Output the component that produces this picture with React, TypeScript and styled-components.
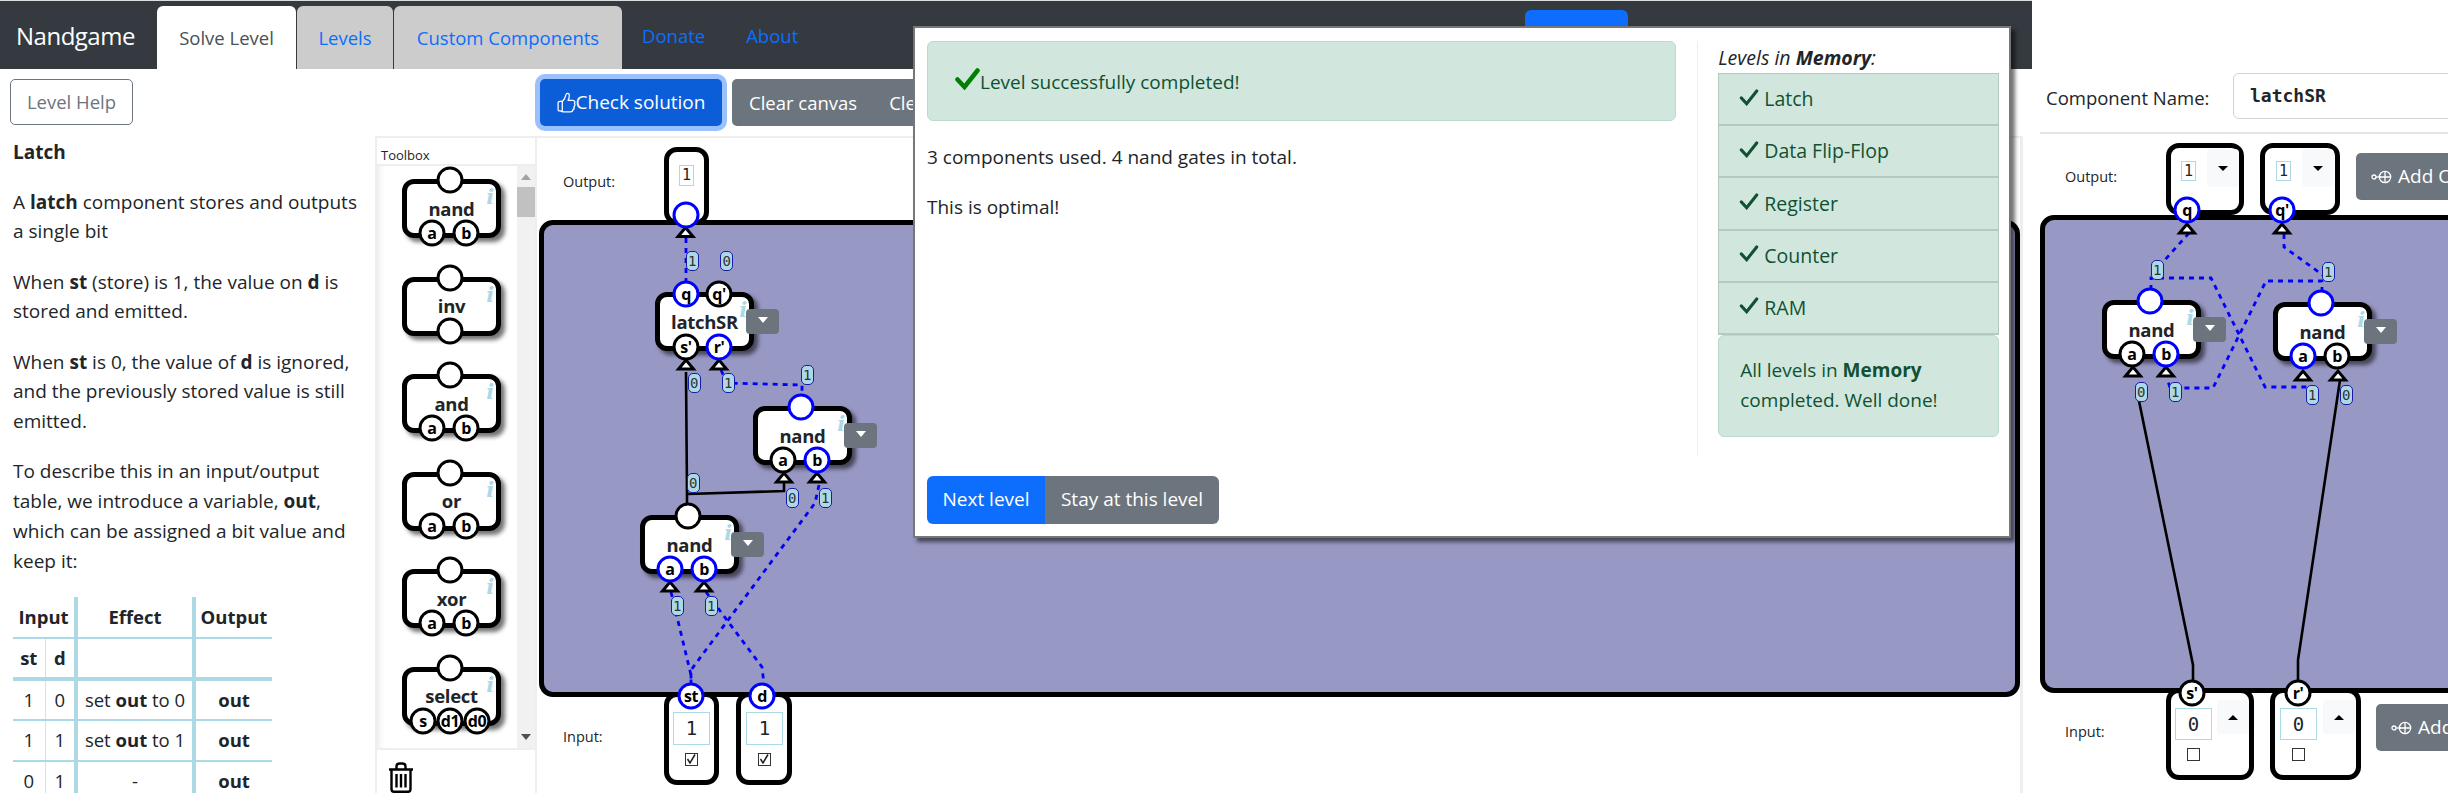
import React from "react";
import styled, { createGlobalStyle } from "styled-components";

const SANS = `"Open Sans", "Noto Sans", sans-serif`;
const MONO = `"DejaVu Sans Mono", "Liberation Mono", monospace`;

const Global = createGlobalStyle`
  html, body { margin: 0; padding: 0; background: #fff; }
  body { font-family: ${SANS}; color: #212529; overflow: hidden; }
  * { box-sizing: border-box; }
`;

const Page = styled.div`
  position: relative; width: 2448px; height: 804px; overflow: hidden;
  font-size: 19px; line-height: 29.7px;
`;
const Navbar = styled.nav`
  width: 2032px; height: 69px; border-top: 1px solid #ddd; background: #343a40;
  display: flex; align-items: flex-end; font-size: 18.5px;
`;
const Brand = styled.div`
  width: 157px; padding-left: 16px; height: 63px; color: #fff; font-size: 24px; line-height: 60px; letter-spacing: -0.5px;
`;
const Tab = styled.div<{ $active?: boolean; $w: number }>`
  width: ${p => p.$w}px; height: 63px; margin-right: 1px; text-align: center; line-height: 64px;
  border-radius: 6px 6px 0 0; background: ${p => (p.$active ? "#fff" : "#ccc")};
  color: ${p => (p.$active ? "#495057" : "#0d6efd")};
`;
const NavLink = styled.div<{ $ml: number }>`
  margin-left: ${p => p.$ml}px; height: 63px; line-height: 59px; color: #0d6efd;
`;
const NavButton = styled.div`
  margin-left: auto; margin-right: 404px; width: 103px; height: 59px; background: #0d6efd; border-radius: 6px 6px 0 0;
`;

const Main = styled.div`
  display: grid; grid-template-columns: 375px 1647px 426px; height: 724px;
`;
const LeftColumn = styled.section`
  padding: 10px 0 0 13px; height: 724px; overflow: hidden;
`;
const HelpButton = styled.div`
  width: 123px; height: 46px; margin-left: -3px; border: 1px solid #6c757d; border-radius: 5px;
  color: #6c757d; text-align: center; line-height: 44px; font-size: 18.5px;
`;
const Title = styled.div`
  font-weight: 700; margin: 13px 0 20px;
`;
const Para = styled.p`
  width: 350px; margin: 0 0 20.6px;
`;
const InfoTable = styled.table`
  border-collapse: collapse; margin-top: 19px; width: 259px; table-layout: fixed;
  col:nth-child(1) { width: 32px; }
  col:nth-child(2) { width: 31px; }
  col:nth-child(3) { width: 118px; }
  col:nth-child(4) { width: 78px; }
`;
const Cell = styled.td<{ $thick?: boolean; $thin?: boolean; $heavy?: boolean }>`
  height: 41px; padding: 0; text-align: center; white-space: nowrap; font-size: 18.5px;
  border-bottom: ${p => (p.$heavy ? 4 : 2)}px solid #add8e6;
  ${p => (p.$thick ? "border-right: 4px solid #add8e6;" : "")}
  ${p => (p.$thin ? "border-right: 1px solid #cfe3ea;" : "")}
`;
const HeadCell = styled(Cell).attrs({ as: "th" })``;

const Center = styled.section`
  display: flex; flex-direction: column; height: 724px;
`;
const Toolbar = styled.div`
  height: 67px; padding: 10px 0 0 165px; display: flex; gap: 10px;
`;
const CheckButton = styled.div`
  width: 182px; height: 47px; border-radius: 5px; background: #0b5ed7; color: #fff;
  box-shadow: 0 0 0 5px #98c1fe; display: flex; align-items: center; justify-content: center;
`;
const GrayGroup = styled.div`
  height: 47px; border-radius: 5px; background: #6c757d; color: #fff; display: flex; align-items: center;
  padding: 0 17px; gap: 32px; width: 400px; font-size: 18.5px;
`;
const Work = styled.div`
  display: flex; height: 657px;
`;
const Toolbox = styled.aside`
  width: 163px; border: 2px solid #eee; border-width: 2px 2px 0 2px; display: flex; flex-direction: column;
`;
const ToolHead = styled.div`
  height: 28px; padding-left: 4px; font-size: 13px; line-height: 34px; border-bottom: 2px solid #eee;
`;
const ToolBody = styled.div`
  height: 584px; display: flex; overflow: hidden; border-bottom: 2px solid #eee;
`;
const ToolList = styled.div`
  flex: 1; padding: 13px 0 0 25px; display: flex; flex-direction: column; gap: 38.6px;
  box-shadow: inset 8px 0 8px -8px #ddd;
`;
const Scroll = styled.div`
  position: relative; width: 18px; background: #f1f1f1;
`;
const ScrollUp = styled.div`
  position: absolute; left: 4px; top: 8px; border: 5px solid transparent; border-top: 0; border-bottom: 6px solid #a3a3a3;
`;
const ScrollDown = styled.div`
  position: absolute; left: 4px; bottom: 8px; border: 5px solid transparent; border-bottom: 0; border-top: 6px solid #505050;
`;
const Thumb = styled.div`
  position: absolute; left: 0; top: 21px; width: 18px; height: 30px; background: #c1c1c1;
`;
const TrashWrap = styled.div`
  padding: 12px 0 0 11px;
`;

const Panel = styled.div`
  flex: 1; display: flex; flex-direction: column; border-top: 2px solid #eee; border-right: 2px solid #eee; padding-left: 2px;
`;
const SlotRow = styled.div<{ $pt: number; $pl: number; $mt?: number; $mb?: number }>`
  position: relative; z-index: 5; display: flex; align-items: flex-start; padding: ${p => p.$pt}px 0 0 ${p => p.$pl}px;
  margin-top: ${p => p.$mt || 0}px; margin-bottom: ${p => p.$mb || 0}px;
`;
const RowLabel = styled.div<{ $mt: number }>`
  flex: none; width: 101px; margin-top: ${p => p.$mt}px; font-size: 14.5px; line-height: 20px;
`;
const Slot = styled.div<{ $w: number; $h: number; $pl?: number; $ml?: number }>`
  position: relative; flex: none; width: ${p => p.$w}px; height: ${p => p.$h}px; border: 5px solid #000; border-radius: 13px; background: #fff;
  padding-left: ${p => p.$pl || 0}px; margin-left: ${p => p.$ml || 0}px;
  display: flex; flex-wrap: wrap; align-content: flex-start;
`;
const ValueBox = styled.div<{ $w: number; $h: number; $mt: number; $mr?: number }>`
  width: ${p => p.$w}px; height: ${p => p.$h}px; margin-top: ${p => p.$mt}px; margin-right: ${p => p.$mr || 0}px;
  border: 1px solid #add8e6; font: 400 ${p => (p.$w > 20 ? 19 : 15)}px/${p => p.$h - 2}px ${MONO}; text-align: center;
`;
const Spin = styled.div<{ $up?: boolean; $mt: number; $h: number }>`
  width: 32px; height: ${p => p.$h}px; margin-top: ${p => p.$mt}px; background: #f8f9fa; border-radius: 4px;
  display: flex; align-items: center; justify-content: center;
  &::after { content: ""; border: 5.5px solid transparent;
    ${p => (p.$up ? "border-top: 0; border-bottom: 5.5px solid #000;" : "border-bottom: 0; border-top: 5.5px solid #000;")} }
`;
const Tick = styled.div<{ $ml: number }>`
  flex: none; width: 13px; height: 13px; margin: 8px 0 0 ${p => p.$ml}px; border: 1.5px solid #333; background: #fff; position: relative;
`;
const Break = styled.div`
  flex-basis: 100%; height: 0;
`;
const AddButton = styled.div<{ $mt: number; $ml: number }>`
  flex: none; display: flex; align-items: center; gap: 6px; height: 47px; padding: 0 15px; margin: ${p => p.$mt}px 0 0 ${p => p.$ml}px;
  border-radius: 5px; background: #6c757d; color: #fff; white-space: nowrap; font-size: 19px;
`;

const Board = styled.div<{ $w: number; $h: number }>`
  position: relative; z-index: 1; width: ${p => p.$w}px; height: ${p => p.$h}px; flex: none; background: #9898c4;
  border: 5px solid #000; border-radius: 14px;
`;
const WireLayer = styled.svg`
  position: absolute; left: 0; top: 0; overflow: visible; pointer-events: none; z-index: 1;
`;
const Pill = styled.div<{ $x: number; $y: number }>`
  position: absolute; left: ${p => p.$x - 6.5}px; top: ${p => p.$y - 10}px; width: 13px; height: 20px; z-index: 2;
  background: #add8e6; border: 1px solid #1a1aa8; border-radius: 5px; color: #333;
  font: 400 14px/18px ${MONO}; text-align: center; letter-spacing: -0.5px;
`;
const NodeBox = styled.div`
  position: relative; flex: none; width: 99px; height: 59px; border: 5.5px solid #000; border-radius: 12px; background: #fff;
  box-shadow: 4px 4px 4px rgba(0, 0, 0, 0.55); display: flex; align-items: center; justify-content: center;
  font-weight: 700; font-size: 18.5px; line-height: 24px; letter-spacing: -0.3px;
`;
const BoardNode = styled(NodeBox)<{ $x: number; $y: number }>`
  position: absolute; z-index: 3; left: ${p => p.$x}px; top: ${p => p.$y}px;
`;
const Info = styled.span`
  position: absolute; right: 2px; top: 1px; font: italic 700 21px/24px "DejaVu Serif", serif; color: #add8e6;
`;
const Pin = styled.div<{ $x: number; $y: number; $on?: boolean }>`
  position: absolute; z-index: 2; left: ${p => p.$x}px; top: ${p => p.$y}px; width: 27px; height: 27px; transform: translate(-50%, -50%);
  border: 3px solid ${p => (p.$on ? "#0000ff" : "#000")}; border-radius: 50%; background: #fff; color: #000;
  font: 700 16px/20px ${SANS}; text-align: center; letter-spacing: -0.4px;
`;
const NodeMenu = styled.div`
  position: absolute; z-index: 3; left: 86px; top: 12px; width: 33px; height: 25px; border-radius: 4px; background: #6c757d;
  display: flex; align-items: center; justify-content: center;
  &::after { content: ""; border: 5.5px solid transparent; border-bottom: 0; border-top: 6px solid #fff; margin-top: -3px; }
`;

const RightColumn = styled.section`
  height: 724px; padding-left: 18px; overflow: hidden; width: 426px;
`;
const NameRow = styled.div`
  height: 65px; border-bottom: 2px solid #e4e4e4; width: 500px; display: flex; align-items: flex-start; padding: 4px 0 0 6px;
`;
const NameLabel = styled.div`
  width: 187px; padding-top: 10px; font-size: 18.5px;
`;
const NameInput = styled.div`
  width: 300px; height: 46px; border: 1px solid #ced4da; border-radius: 6px; padding-left: 16px; font: 700 18px/44px ${MONO};
`;
const RightPanel = styled.div`
  display: flex; flex-direction: column; width: 520px;
`;
const RightRail = styled.div`
  position: absolute; left: 2021px; top: 136px; width: 2px; height: 657px; background: #eee;
`;

const Modal = styled.div`
  position: absolute; z-index: 20; left: 913px; top: 26px; width: 1098px; height: 512px; padding: 13px 10px 0 12px;
  border: 2.5px solid #777; background: #fff; box-shadow: 4px 4px 4px rgba(0, 0, 0, 0.55);
`;
const ModalBody = styled.div`
  display: flex; height: 415px;
`;
const ModalLeft = styled.div`
  width: 772px; padding-right: 21px; border-right: 1px solid #eee;
`;
const Alert = styled.div`
  height: 80px; display: flex; align-items: center; padding: 4px 0 0 27px; margin-bottom: 21px; color: #0f5132;
  background: #d1e7dd; border: 1px solid #badbcc; border-radius: 6px;
`;
const ModalPara = styled.p`
  margin: 0 0 20px; line-height: 30px;
`;
const ModalSide = styled.div`
  width: 281px; margin-left: 20px;
`;
const SideHead = styled.div`
  font-style: italic; font-size: 19.5px; height: 30px; margin-top: 2px;
`;
const LevelList = styled.div`
  border: 1px solid #b5c9c0; border-bottom: 0;
`;
const LevelItem = styled.div`
  height: 52.2px; display: flex; align-items: center; gap: 5px; padding-left: 20px; color: #0f5132; background: #d1e7dd;
  border-bottom: 2px solid #b5c9c0; font-size: 19.5px;
`;
const DoneBox = styled.div`
  height: 102px; padding: 20px 21px; color: #0f5132; background: #d1e7dd; border: 1px solid #badbcc; border-radius: 6px;
`;
const ModalButtons = styled.div`
  display: flex; margin-top: 20px;
`;
const NextButton = styled.div`
  width: 118px; height: 48px; text-align: center; line-height: 47px; color: #fff; background: #0d6efd; border-radius: 6px 0 0 6px;
`;
const StayButton = styled.div`
  width: 174px; height: 48px; text-align: center; line-height: 47px; color: #fff; background: #6c757d; border-radius: 0 6px 6px 0;
`;
const CheckSvg = styled.svg<{ $lift?: number }>`
  flex: none; margin-top: ${p => -(p.$lift || 0)}px;
`;
const IconSvg = styled.svg`
  flex: none; display: block;
`;

type PinDef = { l?: string; x: number; y: number; on?: boolean };
const NODE_PINS = (a = false, b = false, t = false): PinDef[] => [
  { x: 43, y: -4, on: t },
  { l: "a", x: 25, y: 49, on: a },
  { l: "b", x: 59, y: 49, on: b },
];
const TwoPin: PinDef[] = NODE_PINS();
const Tools: { name: string; pins: PinDef[] }[] = [
  { name: "nand", pins: TwoPin },
  { name: "inv", pins: [{ x: 43, y: -4 }, { x: 43, y: 49 }] },
  { name: "and", pins: TwoPin },
  { name: "or", pins: TwoPin },
  { name: "xor", pins: TwoPin },
  { name: "select", pins: [{ x: 43, y: -4 }, { l: "s", x: 16, y: 49 }, { l: "d1", x: 43, y: 49 }, { l: "d0", x: 70, y: 49 }] },
];

const NodeInner = ({ name, pins }: { name: string; pins: PinDef[] }) => (
  <>
    {name}
    <Info>i</Info>
    {pins.map((p, i) => (
      <Pin key={i} $x={p.x} $y={p.y} $on={p.on}>{p.l}</Pin>
    ))}
  </>
);

const Check = ({ w, h, c, sw, lift }: { w: number; h: number; c: string; sw: number; lift?: number }) => (
  <CheckSvg width={w} height={h} viewBox="0 0 25 22" $lift={lift}>
    <path d="M2.5 11.5 L9.5 19 L22.5 2.5" fill="none" stroke={c} strokeWidth={sw} strokeLinecap="round" strokeLinejoin="miter" />
  </CheckSvg>
);

const ThumbIcon = () => (
  <IconSvg width="19" height="21" viewBox="0 0 18 20">
    <path d="M1 10.5C1 9.5 2 9 3 9L5 9C7 7 8 5 8.5 2.5C8.7 1 11.5.8 11.7 3C11.8 5 11 7 10.5 8L15 8C17 8 17.5 10 16.5 11C17.5 12 17 13.5 16 14C16.5 15 16 16.5 15 17C15 18.5 14 19 13 19L6 19C5 19 4 18.5 3 18L2 18C1.5 18 1 17.5 1 17Z M5 9.5L5 18" fill="none" stroke="#fff" strokeWidth="1.2" strokeLinejoin="round" />
  </IconSvg>
);

const TrashIcon = () => (
  <IconSvg width="26" height="31" viewBox="0 0 26 31">
    <path d="M1 7.5H25 M8.5 7V4.5C8.5 2.5 10 1.5 11.5 1.5H14.5C16 1.5 17.5 2.5 17.5 4.5V7" fill="none" stroke="#000" strokeWidth="2.4" />
    <path d="M3.5 8V27C3.5 28.8 4.5 29.7 6 29.7H20C21.5 29.7 22.5 28.8 22.5 27V8" fill="none" stroke="#000" strokeWidth="2.4" />
    <path d="M8.5 12V25.5 M13 12V25.5 M17.5 12V25.5" fill="none" stroke="#000" strokeWidth="2.4" />
  </IconSvg>
);

const PlugIcon = () => (
  <IconSvg width="21" height="14" viewBox="0 0 21 14">
    <circle cx="3" cy="7" r="2" fill="none" stroke="#fff" strokeWidth="1.3" />
    <line x1="5" y1="7" x2="10" y2="7" stroke="#fff" strokeWidth="1.3" />
    <circle cx="14" cy="7" r="5.7" fill="none" stroke="#fff" strokeWidth="1.3" />
    <path d="M14 1.5V12.5 M8.5 7H19.5" stroke="#fff" strokeWidth="1.3" />
  </IconSvg>
);

const TickMark = () => (
  <IconSvg width="10" height="10" viewBox="0 0 10 10">
    <path d="M1.5 5 L4 9 L9 0.5" fill="none" stroke="#222" strokeWidth="1.5" />
  </IconSvg>
);

const Tri = ({ x, y }: { x: number; y: number }) => (
  <polygon points={`${x - 7.5},${y} ${x + 7.5},${y} ${x},${y - 9}`} fill="#fff" stroke="#000" strokeWidth="3" />
);

type Wire = { d: string; on: boolean };
const Wires = ({ ox, oy, w, h, wires, tris }: { ox: number; oy: number; w: number; h: number; wires: Wire[]; tris: [number, number][] }) => (
  <WireLayer width={w} height={h} viewBox={`${ox} ${oy} ${w} ${h}`}>
    {wires.map((l, i) => (
      <path key={i} d={l.d} fill="none" stroke={l.on ? "#0000ff" : "#000"} strokeWidth={l.on ? 2.8 : 2.6} strokeDasharray={l.on ? "5 5" : undefined} />
    ))}
    {tris.map(([x, y], i) => <Tri key={i} x={x} y={y} />)}
  </WireLayer>
);

/* Diagram data is written in page coordinates; each board subtracts its own origin */
const M = { x: 545, y: 225 };
const R = { x: 2045, y: 220 };

const mainWires: Wire[] = [
  { d: "M687 372L688 494L688 516M689 494L785 491L785 483", on: false },
  { d: "M687 238L687 281", on: true },
  { d: "M722 370L728 383L803 385L803 397", on: true },
  { d: "M820 485L816 503L692 670L692 684", on: true },
  { d: "M672 592L692 675L692 684", on: true },
  { d: "M707 592L763 667L765 684", on: true },
];
const mainTris: [number, number][] = [[686.5, 236.5], [687, 369], [720, 369], [785, 482], [818, 482], [671, 591], [705, 591]];
const mainPills: [number, number, string][] = [
  [693, 261, "1"], [727.5, 261, "0"], [695, 383, "0"], [729, 383, "1"], [808, 375, "1"],
  [694, 483, "0"], [793, 498, "0"], [826, 498, "1"], [678, 606, "1"], [712, 606, "1"],
];
const rightWires: Wire[] = [
  { d: "M2137 385L2138 396L2193 665L2193 682", on: false },
  { d: "M2340 380L2337 400L2298 660L2298 682", on: false },
  { d: "M2189 233L2163 262", on: true },
  { d: "M2151 290L2151 278L2211 278L2265 387L2310 387", on: true },
  { d: "M2284 234L2284 247L2327 278", on: true },
  { d: "M2322 292L2322 281L2266 281L2213 388L2170 388L2168 381", on: true },
];
const rightTris: [number, number][] = [[2187, 233], [2282, 233], [2133, 376], [2166, 376], [2303, 380], [2338, 380]];
const rightPills: [number, number, string][] = [
  [2157, 269.5, "1"], [2328, 272, "1"], [2141, 392, "0"], [2175, 392, "1"], [2312, 395, "1"], [2346, 394.5, "0"],
];

const mainNodes = [
  { name: "latchSR", x: 656, y: 292, pins: [{ l: "q", x: 26, y: -3, on: true }, { l: "q'", x: 59, y: -3 }, { l: "s'", x: 26, y: 50 }, { l: "r'", x: 59, y: 50, on: true }] },
  { name: "nand", x: 754, y: 406, pins: NODE_PINS(false, true, true) },
  { name: "nand", x: 641, y: 515, pins: NODE_PINS(true, true, false) },
];
const rightNodes = [
  { name: "nand", x: 2102, y: 300, pins: NODE_PINS(false, true, true) },
  { name: "nand", x: 2273, y: 302, pins: NODE_PINS(true, false, true) },
];

const LEVELS = ["Latch", "Data Flip-Flop", "Register", "Counter", "RAM"];

export default function App() {
  return (
    <Page>
      <Global />
      <Navbar>
        <Brand>Nandgame</Brand>
        <Tab $active $w={139}>Solve Level</Tab>
        <Tab $w={96}>Levels</Tab>
        <Tab $w={228}>Custom Components</Tab>
        <NavLink $ml={19}>Donate</NavLink>
        <NavLink $ml={41}>About</NavLink>
        <NavButton />
      </Navbar>
      <Main>
        <LeftColumn>
          <HelpButton>Level Help</HelpButton>
          <Title>Latch</Title>
          <Para>A <b>latch</b> component stores and outputs a single bit</Para>
          <Para>When <b>st</b> (store) is 1, the value on <b>d</b> is stored and emitted.</Para>
          <Para>When <b>st</b> is 0, the value of <b>d</b> is ignored, and the previously stored value is still emitted.</Para>
          <Para>To describe this in an input/output table, we introduce a variable, <b>out</b>, which can be assigned a bit value and keep it:</Para>
          <InfoTable>
            <colgroup><col /><col /><col /><col /></colgroup>
            <tbody>
              <tr>
                <HeadCell colSpan={2} $thick>Input</HeadCell>
                <HeadCell $thick>Effect</HeadCell>
                <HeadCell>Output</HeadCell>
              </tr>
              <tr>
                <HeadCell $thin $heavy>st</HeadCell>
                <HeadCell $thick $heavy>d</HeadCell>
                <HeadCell $thick $heavy />
                <HeadCell $heavy />
              </tr>
              <tr>
                <Cell $thin>1</Cell><Cell $thick>0</Cell><Cell $thick>set <b>out</b> to 0</Cell><Cell><b>out</b></Cell>
              </tr>
              <tr>
                <Cell $thin>1</Cell><Cell $thick>1</Cell><Cell $thick>set <b>out</b> to 1</Cell><Cell><b>out</b></Cell>
              </tr>
              <tr>
                <Cell $thin>0</Cell><Cell $thick>1</Cell><Cell $thick>-</Cell><Cell><b>out</b></Cell>
              </tr>
            </tbody>
          </InfoTable>
        </LeftColumn>
        <Center>
          <Toolbar>
            <CheckButton><ThumbIcon />Check solution</CheckButton>
            <GrayGroup><span>Clear canvas</span><span>Clear all</span></GrayGroup>
          </Toolbar>
          <Work>
            <Toolbox>
              <ToolHead>Toolbox</ToolHead>
              <ToolBody>
                <ToolList>
                  {Tools.map(t => (
                    <NodeBox key={t.name}><NodeInner name={t.name} pins={t.pins} /></NodeBox>
                  ))}
                </ToolList>
                <Scroll><ScrollUp /><Thumb /><ScrollDown /></Scroll>
              </ToolBody>
              <TrashWrap><TrashIcon /></TrashWrap>
            </Toolbox>
            <Panel>
              <SlotRow $pt={9} $pl={24} $mb={-5}>
                <RowLabel $mt={25}>Output:</RowLabel>
                <Slot $w={45} $h={78} $pl={10}>
                  <ValueBox $w={15} $h={21} $mt={13}>1</ValueBox>
                  <Pin $x={16.5} $y={63} $on />
                </Slot>
              </SlotRow>
              <Board $w={1481} $h={477}>
                <Wires ox={M.x} oy={M.y} w={1471} h={467} wires={mainWires} tris={mainTris} />
                {mainPills.map(([x, y, v], i) => <Pill key={i} $x={x - M.x} $y={y - M.y}>{v}</Pill>)}
                {mainNodes.map((n, i) => (
                  <BoardNode key={i} $x={n.x - M.x} $y={n.y - M.y}>
                    <NodeInner name={n.name} pins={n.pins} />
                    <NodeMenu />
                  </BoardNode>
                ))}
              </Board>
              <SlotRow $pt={0} $pl={24} $mt={-5}>
                <RowLabel $mt={35}>Input:</RowLabel>
                <Slot $w={55} $h={93} $pl={4}>
                  <ValueBox $w={37} $h={33} $mt={15}>1</ValueBox>
                  <Break />
                  <Tick $ml={12}><TickMark /></Tick>
                  <Pin $x={22} $y={-1} $on>st</Pin>
                </Slot>
                <Slot $w={56} $h={93} $pl={5} $ml={17}>
                  <ValueBox $w={37} $h={33} $mt={15}>1</ValueBox>
                  <Break />
                  <Tick $ml={12}><TickMark /></Tick>
                  <Pin $x={21} $y={-1} $on>d</Pin>
                </Slot>
              </SlotRow>
            </Panel>
          </Work>
        </Center>
        <RightColumn>
          <NameRow>
            <NameLabel>Component Name:</NameLabel>
            <NameInput>latchSR</NameInput>
          </NameRow>
          <RightPanel>
            <SlotRow $pt={9} $pl={25}>
              <RowLabel $mt={24}>Output:</RowLabel>
              <Slot $w={78} $h={72} $pl={10}>
                <ValueBox $w={15} $h={20} $mt={13} $mr={11}>1</ValueBox>
                <Spin $mt={1} $h={38} />
                <Pin $x={16} $y={62} $on>q</Pin>
              </Slot>
              <Slot $w={80} $h={72} $pl={11} $ml={16}>
                <ValueBox $w={15} $h={20} $mt={13} $mr={11}>1</ValueBox>
                <Spin $mt={1} $h={38} />
                <Pin $x={17} $y={62} $on>q'</Pin>
              </Slot>
              <AddButton $mt={10} $ml={16}><PlugIcon />Add Output</AddButton>
            </SlotRow>
            <Board $w={500} $h={478}>
              <Wires ox={R.x} oy={R.y} w={490} h={468} wires={rightWires} tris={rightTris} />
              {rightPills.map(([x, y, v], i) => <Pill key={i} $x={x - R.x} $y={y - R.y}>{v}</Pill>)}
              {rightNodes.map((n, i) => (
                <BoardNode key={i} $x={n.x - R.x} $y={n.y - R.y}>
                  <NodeInner name={n.name} pins={n.pins} />
                  <NodeMenu />
                </BoardNode>
              ))}
            </Board>
            <SlotRow $pt={0} $pl={25} $mt={-5}>
              <RowLabel $mt={34}>Input:</RowLabel>
              <Slot $w={88} $h={92} $pl={4}>
                <ValueBox $w={37} $h={32} $mt={15} $mr={5}>0</ValueBox>
                <Spin $up $mt={7} $h={34} />
                <Break />
                <Tick $ml={12} />
                <Pin $x={21} $y={0}>s'</Pin>
              </Slot>
              <Slot $w={91} $h={92} $pl={5} $ml={16}>
                <ValueBox $w={37} $h={32} $mt={15} $mr={6}>0</ValueBox>
                <Spin $up $mt={7} $h={34} />
                <Break />
                <Tick $ml={12} />
                <Pin $x={23} $y={0}>r'</Pin>
              </Slot>
              <AddButton $mt={16} $ml={15}><PlugIcon />Add Input</AddButton>
            </SlotRow>
          </RightPanel>
        </RightColumn>
      </Main>
      <RightRail />
      <Modal>
        <ModalBody>
          <ModalLeft>
            <Alert>
              <Check w={25} h={22} c="#008000" sw={4.5} lift={8} />
              Level successfully completed!
            </Alert>
            <ModalPara>3 components used. 4 nand gates in total.</ModalPara>
            <ModalPara>This is optimal!</ModalPara>
          </ModalLeft>
          <ModalSide>
            <SideHead>Levels in <b>Memory</b>:</SideHead>
            <LevelList>
              {LEVELS.map(l => (
                <LevelItem key={l}><Check w={20} h={17} c="#0f5132" sw={4} lift={4} />{l}</LevelItem>
              ))}
            </LevelList>
            <DoneBox>All levels in <b>Memory</b> completed. Well done!</DoneBox>
          </ModalSide>
        </ModalBody>
        <ModalButtons>
          <NextButton>Next level</NextButton>
          <StayButton>Stay at this level</StayButton>
        </ModalButtons>
      </Modal>
    </Page>
  );
}
